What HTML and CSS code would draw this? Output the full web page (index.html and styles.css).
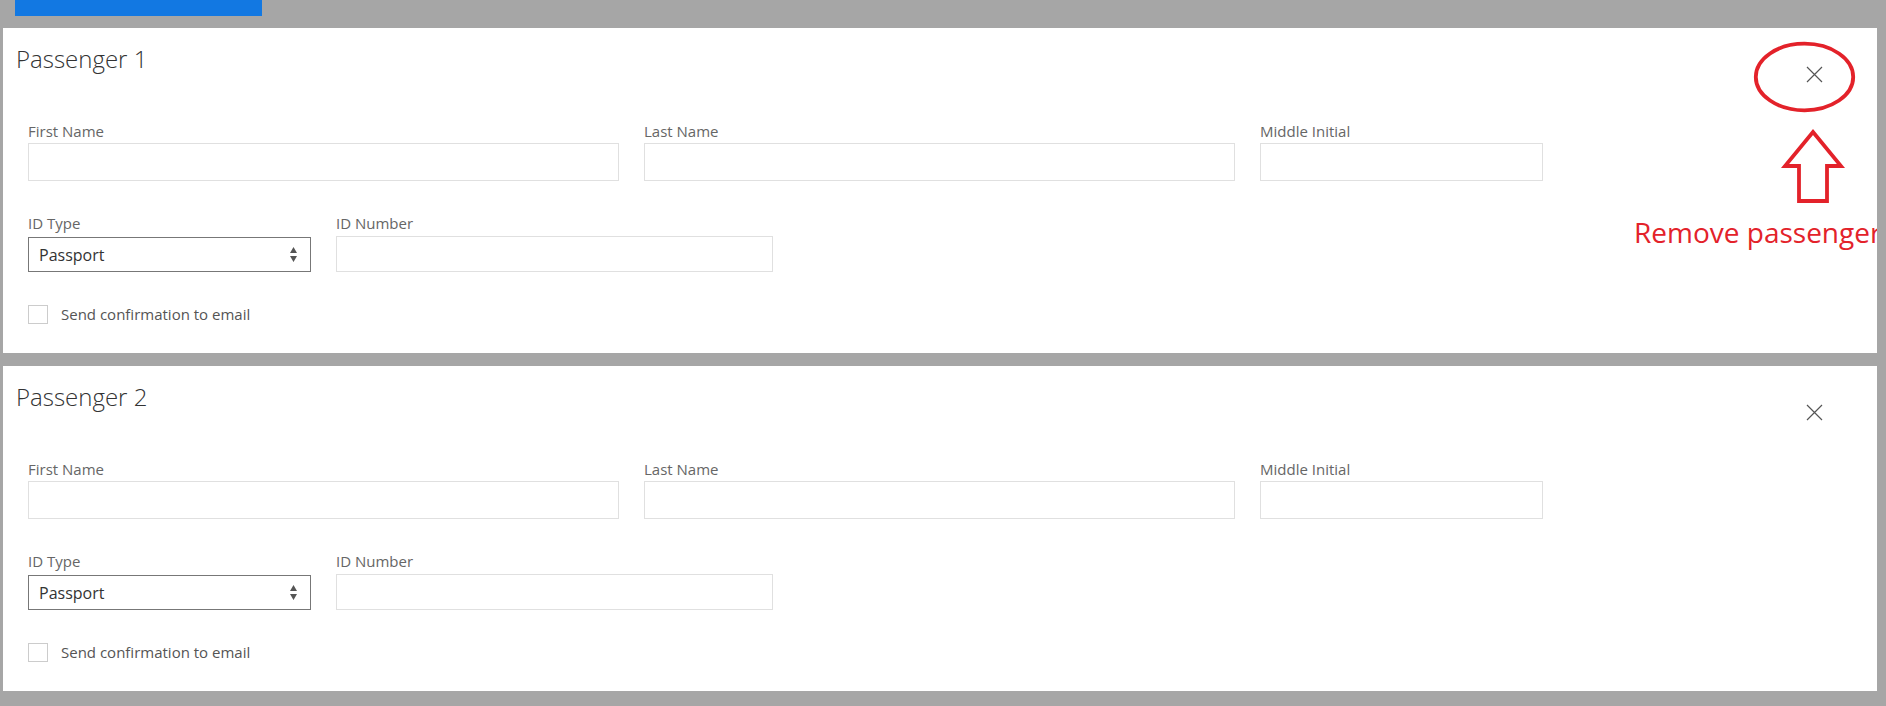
FILE: index.html
```html
<!DOCTYPE html>
<html lang="en">
<head>
<meta charset="utf-8">
<title>Passengers</title>
<link rel="stylesheet" href="styles.css">
</head>
<body>
  <div class="topbar">
    <div class="add-btn"></div>
  </div>

  <section class="card">
    <h2 class="title">Passenger 1</h2>
    <button class="close" aria-label="Remove passenger">
      <svg width="17" height="17" viewBox="0 0 17 17"><path d="M1 1 L16 16 M16 1 L1 16" stroke="#555" stroke-width="1.2" fill="none"/></svg>
    </button>
    <div class="form">
      <div class="row">
        <div class="field w-name"><label class="lbl">First Name</label><input class="inp tall" type="text"></div>
        <div class="field w-name"><label class="lbl">Last Name</label><input class="inp tall" type="text"></div>
        <div class="field w-mid"><label class="lbl">Middle Initial</label><input class="inp tall" type="text"></div>
      </div>
      <div class="row row2">
        <div class="field w-type"><label class="lbl">ID Type</label>
          <div class="select"><span>Passport</span>
            <svg width="7" height="15" viewBox="0 0 7 15"><path d="M0 6 L3.5 0 L7 6 Z M0 9 L7 9 L3.5 15 Z" fill="#555"/></svg>
          </div>
        </div>
        <div class="field w-num"><label class="lbl">ID Number</label><input class="inp short" type="text"></div>
      </div>
      <div class="check-row">
        <span class="box"></span><span class="check-lbl">Send confirmation to email</span>
      </div>
    </div>
    <svg class="annot" width="137" height="180" viewBox="0 0 137 180">
      <ellipse cx="64.5" cy="47" rx="48.7" ry="33.3" fill="none" stroke="#e3222a" stroke-width="3.8"/>
      <polygon points="73,102 101,136 87,136 87,171 59,171 59,136 45,136" fill="none" stroke="#e3222a" stroke-width="3.8" stroke-linejoin="miter"/>
    </svg>
    <div class="annot-text">Remove passenger</div>
  </section>

  <section class="card">
    <h2 class="title">Passenger 2</h2>
    <button class="close" aria-label="Remove passenger">
      <svg width="17" height="17" viewBox="0 0 17 17"><path d="M1 1 L16 16 M16 1 L1 16" stroke="#555" stroke-width="1.2" fill="none"/></svg>
    </button>
    <div class="form">
      <div class="row">
        <div class="field w-name"><label class="lbl">First Name</label><input class="inp tall" type="text"></div>
        <div class="field w-name"><label class="lbl">Last Name</label><input class="inp tall" type="text"></div>
        <div class="field w-mid"><label class="lbl">Middle Initial</label><input class="inp tall" type="text"></div>
      </div>
      <div class="row row2">
        <div class="field w-type"><label class="lbl">ID Type</label>
          <div class="select"><span>Passport</span>
            <svg width="7" height="15" viewBox="0 0 7 15"><path d="M0 6 L3.5 0 L7 6 Z M0 9 L7 9 L3.5 15 Z" fill="#555"/></svg>
          </div>
        </div>
        <div class="field w-num"><label class="lbl">ID Number</label><input class="inp short" type="text"></div>
      </div>
      <div class="check-row">
        <span class="box"></span><span class="check-lbl">Send confirmation to email</span>
      </div>
    </div>
  </section>
</body>
</html>
```

FILE: styles.css
```css
* { box-sizing: border-box; }
html, body { margin: 0; padding: 0; }
body {
  background: #a6a6a6;
  font-family: "Open Sans", "Noto Sans", sans-serif;
  width: 1886px;
  height: 706px;
  overflow: hidden;
}
.topbar {
  height: 28px;
  padding-left: 15px;
}
.add-btn {
  width: 247px;
  height: 16px;
  background: #1278e2;
}
.card {
  position: relative;
  background: #fff;
  height: 325px;
  margin: 0 9px 13px 3px;
  padding: 14px 0 0 13px;
  overflow: hidden;
}
.title {
  margin: 0;
  font-weight: 300;
  font-size: 24px;
  line-height: 33px;
  color: #333;
}
.close {
  position: absolute;
  top: 38px;
  right: 54px;
  width: 17px;
  height: 17px;
  padding: 0;
  border: 0;
  background: transparent;
  display: block;
}
.close svg { display: block; }
.form {
  margin-top: 46px;
  padding-left: 12px;
}
.row {
  display: flex;
  gap: 25px;
}
.row2 {
  margin-top: 32px;
}
.field {
  display: flex;
  flex-direction: column;
}
.w-name { width: 591px; }
.w-mid { width: 283px; }
.w-type { width: 283px; }
.w-num { width: 437px; }
.lbl {
  font-size: 15px;
  line-height: 20px;
  color: #666;
}
.inp {
  display: block;
  width: 100%;
  border: 1px solid #e0e0e0;
  background: #fff;
  outline: none;
  padding: 0 8px;
  font-family: inherit;
}
.inp.tall { height: 38px; margin-top: 2px; }
.inp.short { height: 36px; margin-top: 3px; }
.select {
  margin-top: 4px;
  height: 35px;
  border: 1px solid #777;
  display: flex;
  align-items: center;
  justify-content: space-between;
  padding: 0 13px 0 10px;
  font-size: 16px;
  color: #333;
}
.select svg { display: block; }
.check-row {
  margin-top: 33px;
  display: flex;
  align-items: center;
  gap: 13px;
}
.box {
  width: 20px;
  height: 19px;
  border: 1px solid #ccc;
  background: #fff;
}
.check-lbl {
  font-size: 15px;
  line-height: 19px;
  color: #555;
}
.annot {
  position: absolute;
  left: 1737px;
  top: 2px;
}
.annot-text {
  position: absolute;
  left: 1631px;
  top: 190px;
  font-size: 28px;
  line-height: 28px;
  color: #e3222a;
  white-space: nowrap;
}
```
